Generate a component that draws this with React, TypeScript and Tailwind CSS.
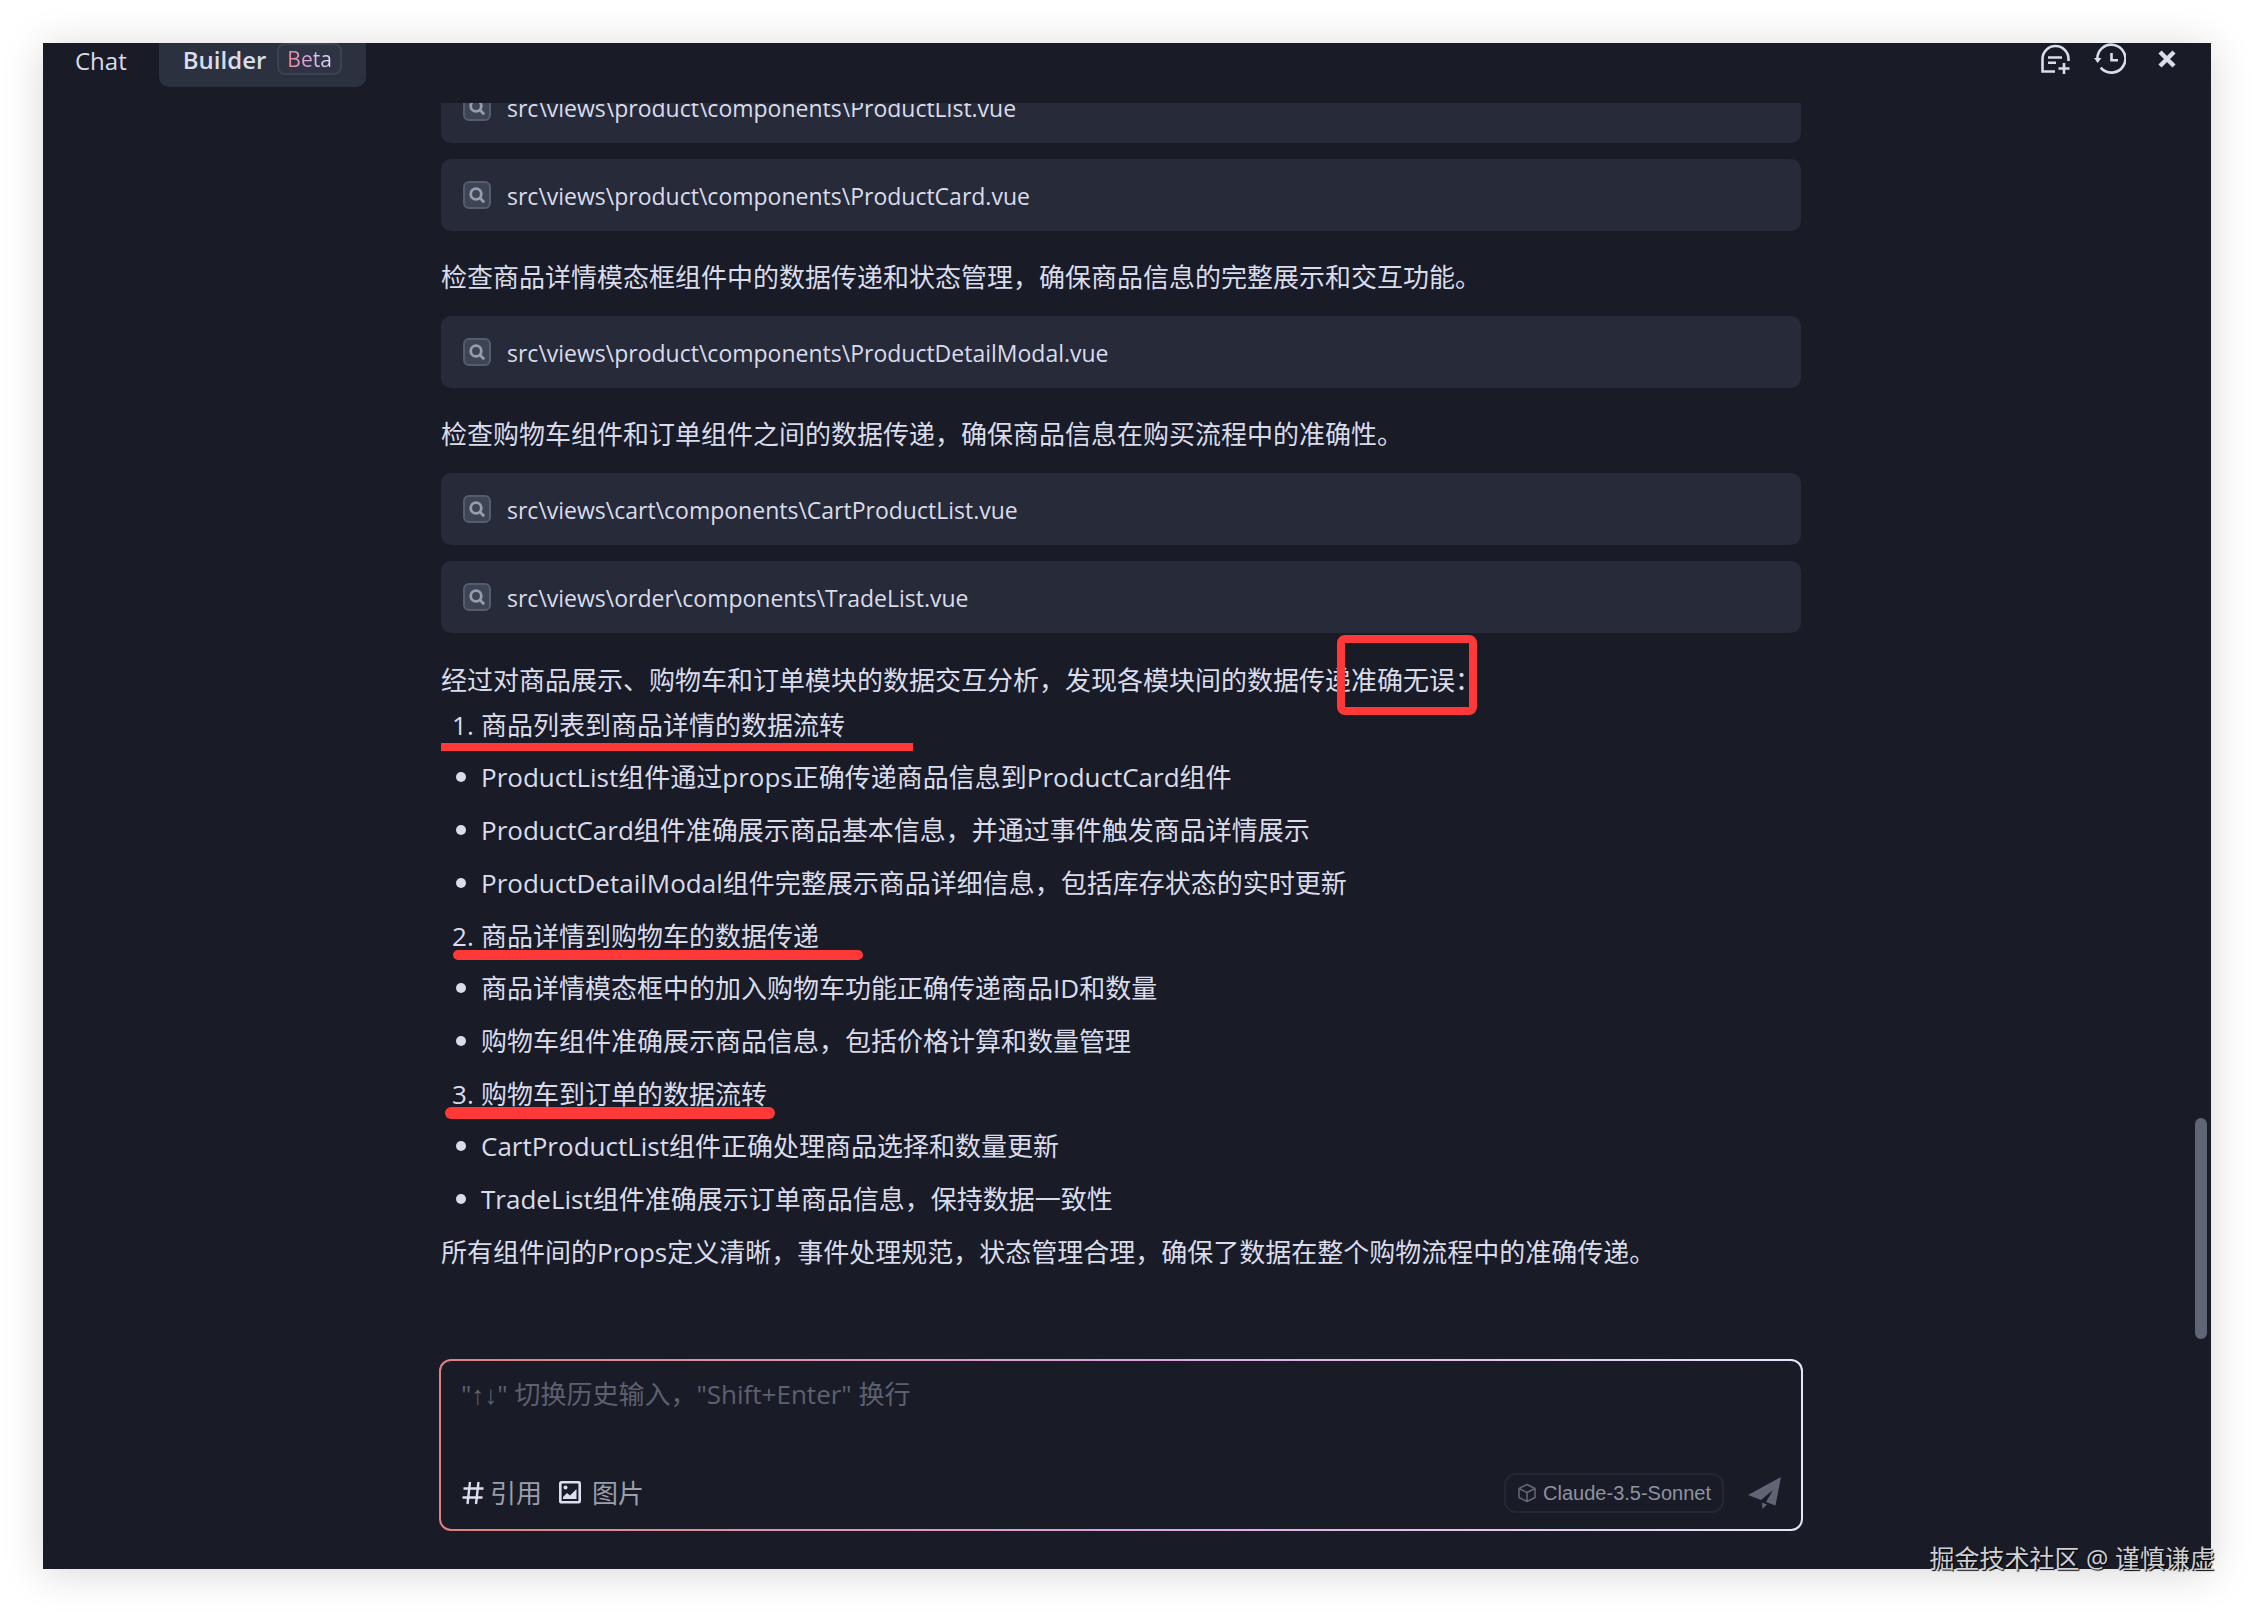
import type { ReactNode } from 'react';

const files = {
  list: 'src\\views\\product\\components\\ProductList.vue',
  card: 'src\\views\\product\\components\\ProductCard.vue',
  detail: 'src\\views\\product\\components\\ProductDetailModal.vue',
  cart: 'src\\views\\cart\\components\\CartProductList.vue',
  trade: 'src\\views\\order\\components\\TradeList.vue',
};

const sections = [
  {
    title: '商品列表到商品详情的数据流转',
    mark: '-left-10 top-10 h-2 w-[472px]',
    items: [
      'ProductList组件通过props正确传递商品信息到ProductCard组件',
      'ProductCard组件准确展示商品基本信息，并通过事件触发商品详情展示',
      'ProductDetailModal组件完整展示商品详细信息，包括库存状态的实时更新',
    ],
  },
  {
    title: '商品详情到购物车的数据传递',
    mark: '-left-7 top-9 h-[10px] w-[410px] rounded-full',
    items: ['商品详情模态框中的加入购物车功能正确传递商品ID和数量', '购物车组件准确展示商品信息，包括价格计算和数量管理'],
  },
  {
    title: '购物车到订单的数据流转',
    mark: '-left-9 top-[35px] h-3 w-[330px] rounded-full',
    items: ['CartProductList组件正确处理商品选择和数量更新', 'TradeList组件准确展示订单商品信息，保持数据一致性'],
  },
];

function NewChatIcon() {
  return (
    <svg width="30" height="30" viewBox="0 0 30 30" fill="none" stroke="currentColor" strokeWidth="2.6">
      <path d="M15 27.5H2.5V15a13 13 0 0 1 26 0v2" />
      <path d="M8 13.5h14M8 18.8h8M24 19v11M18.5 24.5h11" />
    </svg>
  );
}

function HistoryIcon() {
  return (
    <svg width="32" height="32" viewBox="0 0 32 32" fill="none" stroke="currentColor" strokeWidth="2.6">
      <path d="M3.5 17.5a14 14 0 1 1 3.2 7.2" />
      <path d="M17.5 10v7.3H24" />
      <path d="M0 15h7.4l-3.7 5z" fill="currentColor" stroke="none" />
    </svg>
  );
}

function CloseIcon() {
  return (
    <svg width="18" height="18" viewBox="0 0 18 18" stroke="currentColor" strokeWidth="4.4">
      <path d="M2 2l14 14M16 2L2 16" />
    </svg>
  );
}

function SearchBadge() {
  return (
    <span className="flex size-7 shrink-0 items-center justify-center rounded-md border-2 border-[#555c6d] bg-[#3d4453] text-[#969daf]">
      <svg width="18" height="18" viewBox="0 0 18 18" fill="none" stroke="currentColor" strokeWidth="2.8">
        <circle cx="8" cy="8" r="5.3" />
        <path d="M11.6 11.8l4.6 4.4" />
      </svg>
    </span>
  );
}

function FileCard({ path }: { path: string }) {
  return (
    <div className="flex h-[72px] shrink-0 items-center gap-4 rounded-[10px] bg-[#272a39] px-[22px]">
      <SearchBadge />
      <span className="pt-0.5 text-[23px] leading-8">{path}</span>
    </div>
  );
}

function Note({ children }: { children: ReactNode }) {
  return <p className="mt-7 mb-5 leading-[37px]">{children}</p>;
}

function Header() {
  return (
    <header className="flex h-[60px] shrink-0 items-start justify-between pr-[35px] pl-4">
      <nav className="flex text-2xl">
        <button type="button" className="h-[44px] px-4 pb-2 leading-[34px]">
          Chat
        </button>
        <button
          type="button"
          className="ml-4 flex h-[44px] items-start gap-[11px] rounded-b-[10px] bg-[#2c3140] px-6 font-semibold leading-[34px]"
        >
          Builder
          <span className="h-8 rounded-lg border-2 border-[#3c4252] bg-[#2f3444] px-2 text-[21px] font-normal leading-7">
            <span className="bg-gradient-to-r from-[#f0848c] via-[#dca6e8] to-[#e4e2fb] bg-clip-text text-transparent">Beta</span>
          </span>
        </button>
      </nav>
      <div className="flex items-center">
        <button type="button" aria-label="New chat" className="mr-6">
          <NewChatIcon />
        </button>
        <button type="button" aria-label="History" className="mr-8">
          <HistoryIcon />
        </button>
        <button type="button" aria-label="Close">
          <CloseIcon />
        </button>
      </div>
    </header>
  );
}

function Summary() {
  return (
    <>
      <p className="mt-6 leading-[46px]">
        经过对商品展示、购物车和订单模块的数据交互分析，发现各模块间的数据传递
        <span className="relative">
          准确无误：
          <span className="absolute -top-[27px] -left-[14px] h-20 w-[140px] rounded-lg border-8 border-[#ff3838]" />
        </span>
      </p>
      <ol className="flex flex-col gap-[9px] leading-[44px]">
        {sections.map((section, i) => (
          <li key={section.title}>
            <div className="flex">
              <span className="w-10 shrink-0 pl-[11px]">{i + 1}.</span>
              <span className="relative">
                {section.title}
                <span className={`absolute bg-[#ff3838] ${section.mark}`} />
              </span>
            </div>
            <ul className="mt-2 flex flex-col gap-[9px]">
              {section.items.map((item) => (
                <li key={item} className="flex items-center">
                  <span className="mr-[15px] ml-[15px] size-[10px] shrink-0 rounded-full bg-[#d9dceb]" />
                  {item}
                </li>
              ))}
            </ul>
          </li>
        ))}
      </ol>
      <p className="mt-[9px] leading-[44px]">
        所有组件间的Props定义清晰，事件处理规范，状态管理合理，确保了数据在整个购物流程中的准确传递。
      </p>
    </>
  );
}

function Composer() {
  return (
    <form className="mx-auto mb-[38px] w-full max-w-[1364px] shrink-0 rounded-xl bg-gradient-to-r from-[#e08080] via-[#dba4dc] via-50% to-[#e6e5fa] p-0.5">
      <div className="flex h-[168px] flex-col justify-between rounded-[10px] bg-[#191b26] pt-[15px] pr-5 pb-4 pl-5">
        <textarea
          aria-label="Message"
          placeholder={'"↑↓" 切换历史输入，"Shift+Enter" 换行'}
          className="h-20 w-full resize-none bg-transparent font-['Open_Sans','Liberation_Sans','Noto_Sans_CJK_SC',sans-serif] text-[26px] leading-9 outline-none placeholder:text-[#5c6170]"
        />
        <div className="flex h-10 items-center justify-between">
          <div className="flex items-center pl-px text-[#9a9fae]">
            <button type="button" className="flex items-center gap-1.5">
              <svg width="22" height="24" viewBox="0 0 22 24" fill="none" stroke="#dcdff0" strokeWidth="2.4">
                <path d="M8 1L5.5 23M16.5 1L14 23M1.5 7.5h20M.5 16.5h20" />
              </svg>
              引用
            </button>
            <button type="button" className="ml-[17px] flex items-center gap-[11px]">
              <svg width="22" height="24" viewBox="0 0 22 24" fill="none">
                <rect x="1.3" y="1.3" width="19.4" height="20" rx="1" stroke="#dcdff0" strokeWidth="2.6" />
                <circle cx="6.5" cy="6.5" r="2" fill="#dcdff0" />
                <path d="M4 18v-2l4-4 3 2.5L17.500 8v10z" fill="#dcdff0" />
              </svg>
              图片
            </button>
          </div>
          <div className="flex items-center">
            <button
              type="button"
              className="flex h-10 items-center gap-1.5 rounded-xl border-2 border-[#242733] px-[11px] font-['Liberation_Sans',sans-serif] text-xl text-[#8e93a2]"
            >
              <svg width="20" height="20" viewBox="0 0 20 20" fill="none" stroke="#646978" strokeWidth="1.5" strokeLinejoin="round">
                <path d="M10 1.500l8 4v9l-8 4-8-4v-9zM2 5.500l8 4 8-4M10 9.500v9" />
              </svg>
              Claude-3.5-Sonnet
            </button>
            <button type="submit" aria-label="Send" className="ml-6 text-[#5f6574]">
              <svg width="33" height="33" viewBox="0 0 33 33" fill="currentColor">
                <path d="M33 0L27.500 28.500l-9.500-3.500L25 13 13 23 0 18z" />
                <path d="M14 25.500l5 2-4.500 4.500z" />
              </svg>
            </button>
          </div>
        </div>
      </div>
    </form>
  );
}

export default function App() {
  return (
    <div className="h-screen bg-white p-[43px] font-['Open_Sans','Noto_Sans_CJK_SC',sans-serif] text-[26px] text-[#d9dceb]">
      <main className="relative flex h-full flex-col bg-[#191b26] shadow-[0_4px_40px_rgba(0,0,0,0.16)]">
        <Header />
        <div className="flex min-h-0 flex-1 flex-col pr-3">
          <section className="flex min-h-0 flex-1 flex-col justify-end overflow-hidden">
            <div className="mx-auto w-full max-w-[1360px] pb-[85px]">
              <div className="flex flex-col gap-4">
                <FileCard path={files.list} />
                <FileCard path={files.card} />
              </div>
              <Note>检查商品详情模态框组件中的数据传递和状态管理，确保商品信息的完整展示和交互功能。</Note>
              <FileCard path={files.detail} />
              <Note>检查购物车组件和订单组件之间的数据传递，确保商品信息在购买流程中的准确性。</Note>
              <div className="flex flex-col gap-4">
                <FileCard path={files.cart} />
                <FileCard path={files.trade} />
              </div>
              <Summary />
            </div>
          </section>
          <Composer />
        </div>
        <div className="absolute right-1 bottom-[230px] h-[221px] w-3 rounded-full bg-[#5f6574]" />
        <p className="absolute -right-1 -bottom-[7px] text-[25px] leading-9 text-[#cfcfd3] [text-shadow:1px_1px_1px_#000]">
          掘金技术社区 @ 谨慎谦虚
        </p>
      </main>
    </div>
  );
}
